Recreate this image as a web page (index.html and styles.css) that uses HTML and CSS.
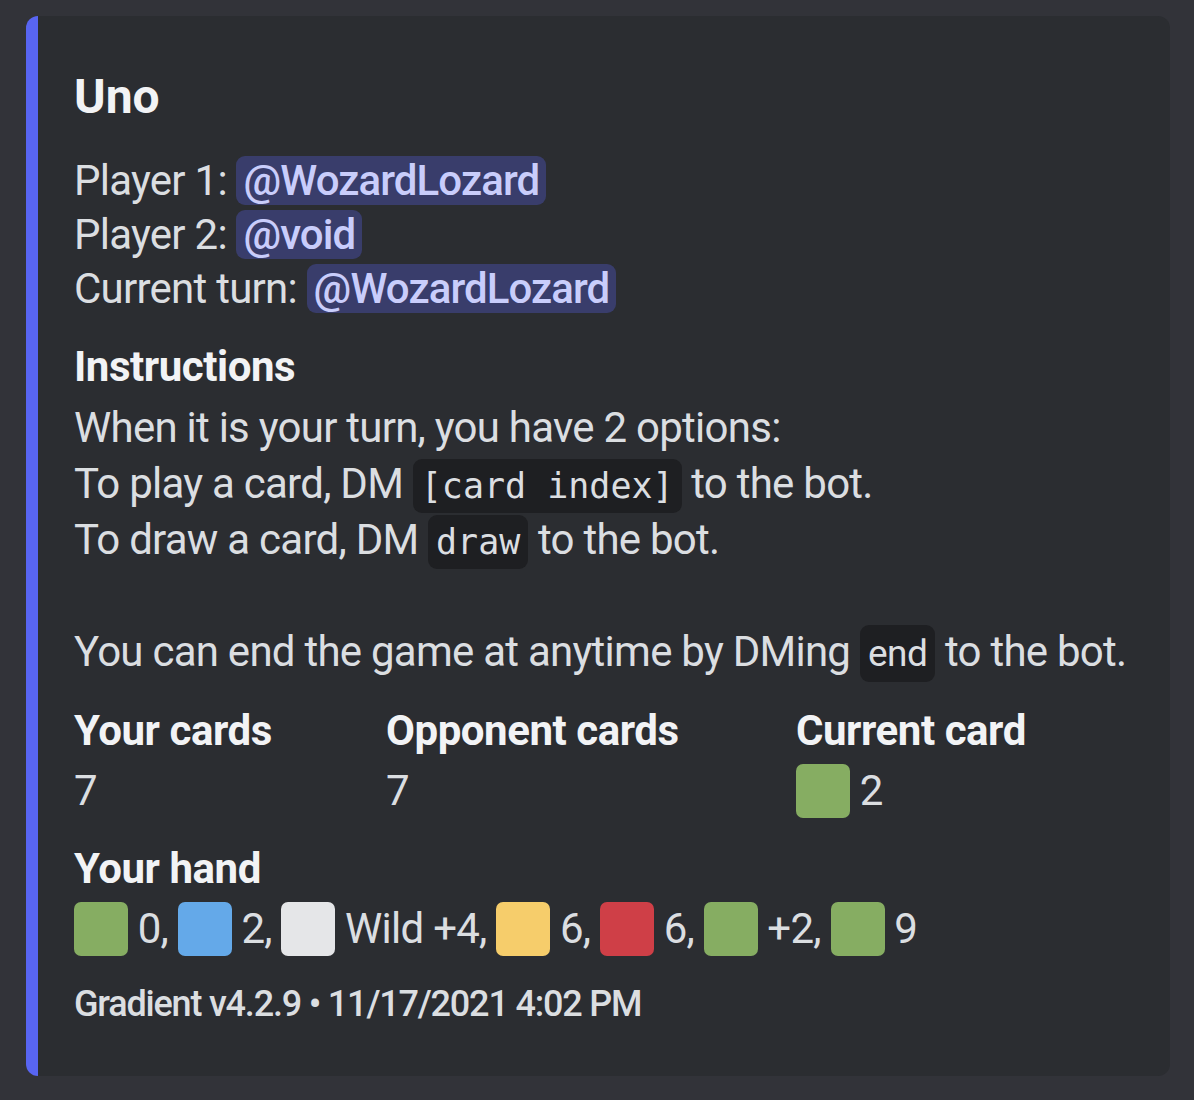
FILE: index.html
```html
<!DOCTYPE html>
<html lang="en">
<head>
<meta charset="utf-8">
<title>Uno</title>
<link rel="stylesheet" href="styles.css">
</head>
<body>
<div class="embed">
  <div class="title">Uno</div>
  <div class="desc">Player 1: <span class="mention">@WozardLozard</span><br>Player 2: <span class="mention">@void</span><br>Current turn: <span class="mention">@WozardLozard</span></div>
  <div class="fields">
    <div class="field full">
      <div class="fname">Instructions</div>
      <div class="fvalue tall">When it is your turn, you have 2 options:<br>To play a card, DM <code class="code">[card index]</code> to the bot.<br>To draw a card, DM <code class="code">draw</code> to the bot.<br><br>You can end the game at anytime by DMing <code class="code sans">end</code> to the bot.</div>
    </div>
    <div class="field">
      <div class="fname">Your cards</div>
      <div class="fvalue">7</div>
    </div>
    <div class="field">
      <div class="fname">Opponent cards</div>
      <div class="fvalue">7</div>
    </div>
    <div class="field">
      <div class="fname">Current card</div>
      <div class="fvalue"><span class="sq green"></span> 2</div>
    </div>
    <div class="field full">
      <div class="fname">Your hand</div>
      <div class="fvalue"><span class="sq green"></span> 0, <span class="sq blue"></span> 2, <span class="sq white"></span> Wild +4, <span class="sq yellow"></span> 6, <span class="sq red"></span> 6, <span class="sq green"></span> +2, <span class="sq green"></span> 9</div>
    </div>
  </div>
  <div class="footer">Gradient v4.2.9 • 11/17/2021 4:02 PM</div>
</div>
</body>
</html>
```
FILE: styles.css
```css
html, body {
  margin: 0;
  padding: 0;
  background: #323339;
}
body {
  padding: 16px 0 0 26px;
  height: 1100px;
  box-sizing: border-box;
  font-family: Roboto, "Noto Sans", sans-serif;
  color: #dbdee1;
  letter-spacing: -0.75px;
}
.embed {
  width: 1144px;
  box-sizing: border-box;
  background: #2b2d31;
  border-left: 12px solid #5865f2;
  border-radius: 12px;
  padding: 24px 48px 48px 36px;
}
.title {
  margin-top: 24px;
  font-size: 48px;
  line-height: 66px;
  font-weight: 700;
  color: #f2f3f5;
  letter-spacing: 0;
}
.desc {
  margin-top: 24px;
  font-size: 42px;
  line-height: 54px;
}
.mention {
  background: rgba(88, 101, 242, 0.3);
  color: #c9cdfb;
  font-weight: 500;
  border-radius: 9px;
  padding: 0 7px;
  letter-spacing: -0.9px;
}
.fields {
  margin-top: 24px;
  display: grid;
  grid-template-columns: 288px 386px 1fr;
  column-gap: 24px;
  row-gap: 24px;
}
.field.full {
  grid-column: 1 / -1;
}
.fname {
  font-size: 42px;
  line-height: 54px;
  font-weight: 700;
  color: #f2f3f5;
  margin-bottom: 6px;
  letter-spacing: -0.45px;
}
.fvalue {
  font-size: 42px;
  line-height: 54px;
  white-space: nowrap;
}
.fvalue.tall {
  line-height: 56px;
}
.code {
  font-family: "DejaVu Sans Mono", monospace;
  font-size: 35px;
  line-height: 1;
  letter-spacing: 0;
  background: #1e1f22;
  border-radius: 9px;
  padding: 7px 8px;
}
.code.sans {
  font-family: Roboto, sans-serif;
  font-size: 37px;
  letter-spacing: -0.5px;
}
.sq {
  display: inline-block;
  width: 54px;
  height: 54px;
  border-radius: 7px;
  vertical-align: top;
}
.green { background: #86ad62; }
.blue { background: #64a9e9; }
.white { background: #e5e6e8; }
.yellow { background: #f6cd6b; }
.red { background: #cf3f47; }
.footer {
  margin-top: 24px;
  font-size: 36px;
  line-height: 48px;
  font-weight: 500;
  letter-spacing: -1.2px;
}
```
